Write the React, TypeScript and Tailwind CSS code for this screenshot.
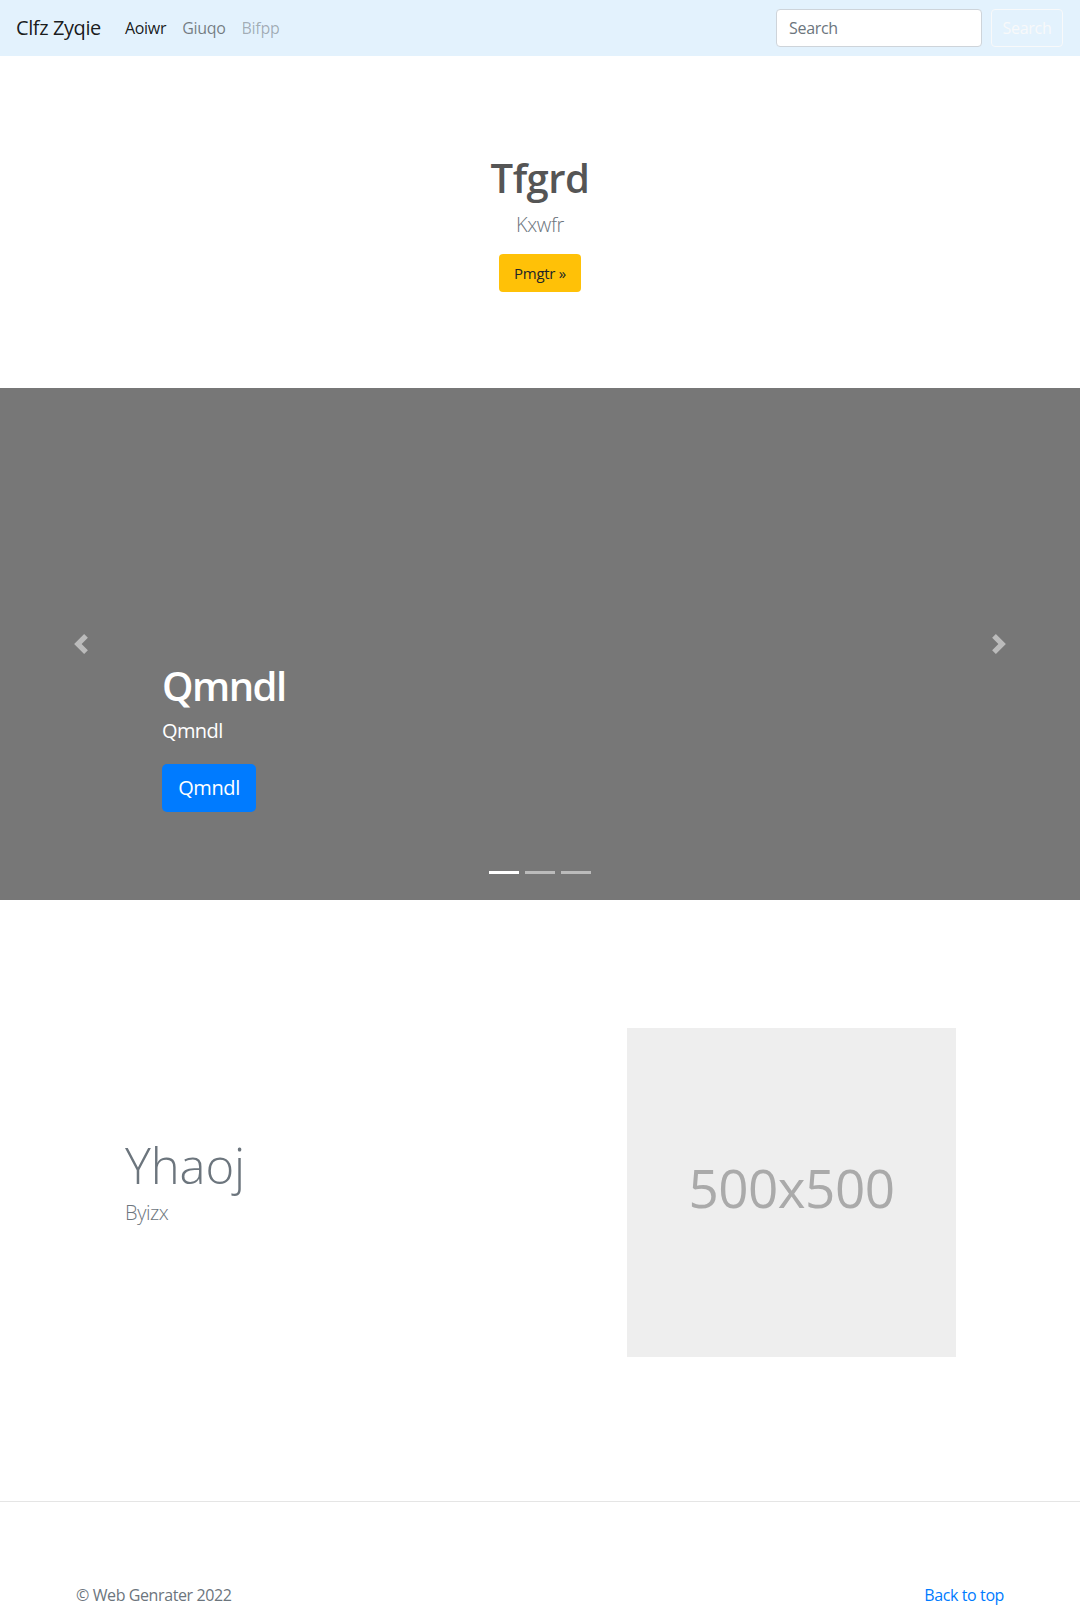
import React from "react";

const font = { fontFamily: '"Open Sans", "Noto Sans", "Liberation Sans", sans-serif' };

function Chevron({ dir }: { dir: "left" | "right" }) {
  return (
    <svg viewBox="0 0 8 8" className="w-5 h-5" fill="#fff">
      {dir === "left" ? (
        <path d="M5.25 0l-4 4 4 4 1.5-1.5L4.25 4l2.5-2.5L5.25 0z" />
      ) : (
        <path d="M2.75 0l-1.5 1.5L3.75 4l-2.5 2.5L2.75 8l4-4-4-4z" />
      )}
    </svg>
  );
}

function Navbar() {
  return (
    <nav className="h-14 bg-[#e3f2fd] flex items-center pl-4 pr-[17px]">
      <a className="text-[20px] tracking-[-0.4px] text-black/90 mr-4 leading-[30px]">Clfz Zyqie</a>
      <ul className="flex items-center text-[16px] tracking-[-0.3px]">
        <li className="px-2 text-black/90">Aoiwr</li>
        <li className="px-2 text-black/50">Giuqo</li>
        <li className="px-2 text-black/30">Bifpp</li>
      </ul>
      <form className="ml-auto flex items-center">
        <input
          placeholder="Search"
          className="w-[206px] h-[38px] px-3 rounded border border-[#ced4da] bg-white text-[16px] tracking-[-0.3px] placeholder:text-[#6c757d] outline-none"
        />
        <button
          type="button"
          className="ml-[9px] w-[72px] h-[38px] rounded border border-[#f8f9fa] text-[#f8f9fa] text-[16px] tracking-[-0.3px]"
        >
          Search
        </button>
      </form>
    </nav>
  );
}

function Hero() {
  return (
    <section className="h-[332px] flex flex-col items-center pt-[98px]">
      <h1 className="text-[40px] leading-[48px] font-semibold text-[#555] tracking-[-0.5px]">Tfgrd</h1>
      <p className="mt-[8px] text-[20px] leading-[30px] font-light text-[#6c757d] tracking-[-0.4px]">Kxwfr</p>
      <button className="mt-[14px] w-[82px] h-[38px] rounded bg-[#ffc107] text-[#212529] text-[15px] tracking-[-0.3px]">
        Pmgtr »
      </button>
    </section>
  );
}

function Carousel() {
  return (
    <section className="relative h-[512px] bg-[#777]">
      <div className="h-full flex flex-col justify-end pl-[162px] pb-[88px]">
        <h1 className="text-[40px] leading-[48px] font-semibold text-white tracking-[-1.5px]">Qmndl</h1>
        <p className="mt-[6px] text-[20px] leading-[30px] text-white tracking-[-0.6px]">Qmndl</p>
        <button className="mt-[18px] w-[94px] h-[48px] rounded-[5px] bg-[#007bff] text-white text-[20px] tracking-[-0.4px]">
          Qmndl
        </button>
      </div>
      <div className="absolute left-0 top-0 h-full w-[162px] flex items-center justify-center opacity-50">
        <Chevron dir="left" />
      </div>
      <div className="absolute right-0 top-0 h-full w-[162px] flex items-center justify-center opacity-50">
        <Chevron dir="right" />
      </div>
      <ol className="absolute left-0 right-0 bottom-[26px] flex justify-center gap-[6px]">
        <li className="w-[30px] h-[3px] bg-white" />
        <li className="w-[30px] h-[3px] bg-white opacity-50" />
        <li className="w-[30px] h-[3px] bg-white opacity-50" />
      </ol>
    </section>
  );
}

function Feature() {
  return (
    <section className="h-[601px] flex items-center pl-[125px] pb-[16px]">
      <div className="w-[502px] pb-[22px]">
        <h2 className="text-[49px] leading-[58px] font-light text-[#6c757d] tracking-[-0.1px]">Yhaoj</h2>
        <p className="mt-[4px] text-[20px] leading-[30px] font-light text-[#6c757d] tracking-[-0.4px]">Byizx</p>
      </div>
      <div className="w-[329px] h-[329px] bg-[#eee] flex items-center justify-center pb-[10px]">
        <span className="text-[53px] text-[#aaa] tracking-[-0.5px]">500x500</span>
      </div>
    </section>
  );
}

function Footer() {
  return (
    <footer className="border-t border-[#e5e5e5] pt-[81px] pl-[76px] pr-[76px] flex justify-between text-[16px] leading-6 tracking-[-0.4px]">
      <p className="text-[#6c757d]">© Web Genrater 2022</p>
      <a className="text-[#007bff]">Back to top</a>
    </footer>
  );
}

export default function App() {
  return (
    <div style={font} className="bg-white min-h-[1606px]">
      <Navbar />
      <Hero />
      <Carousel />
      <Feature />
      <Footer />
    </div>
  );
}
